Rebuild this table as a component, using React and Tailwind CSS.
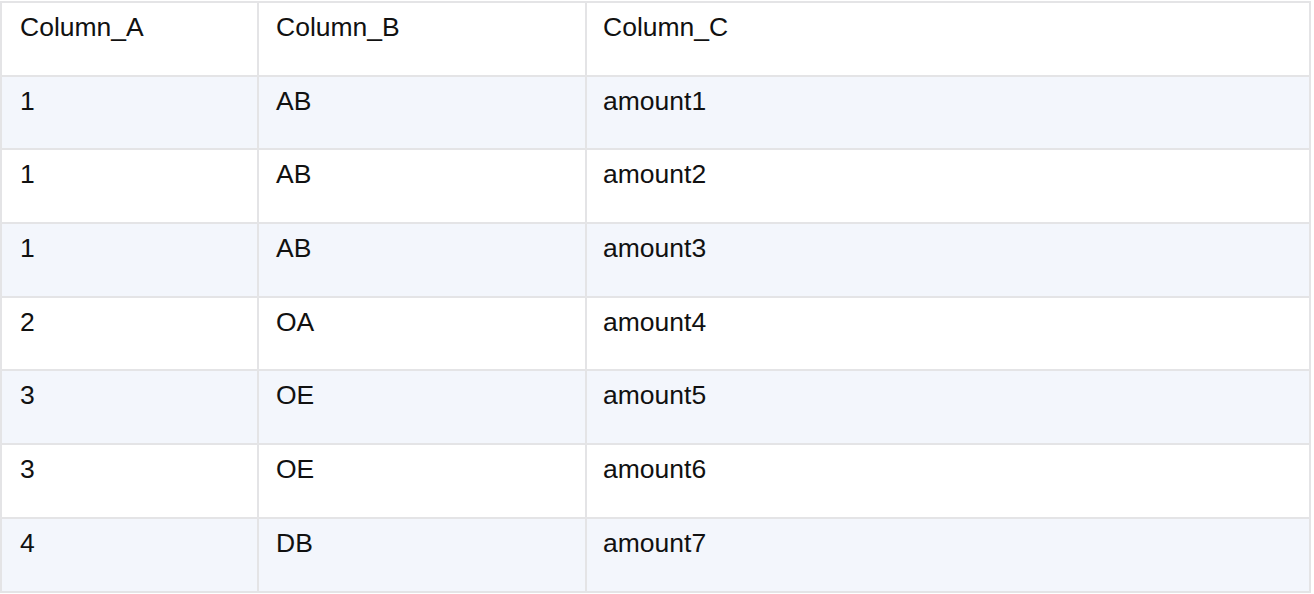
import React from "react";

const rows = [
  ["1", "AB", "amount1"],
  ["1", "AB", "amount2"],
  ["1", "AB", "amount3"],
  ["2", "OA", "amount4"],
  ["3", "OE", "amount5"],
  ["3", "OE", "amount6"],
  ["4", "DB", "amount7"],
];

const pads = ["pl-[18px] border-r-2 border-[#e4e4e6]", "pl-[17px] border-r-2 border-[#e4e4e6]", "pl-[16px]"];

function Row({ cells, bg }) {
  return (
    <div className={`grid grid-cols-[257px_328px_724px] h-[73.7px] border-b-2 border-[#e4e4e6] ${bg}`}>
      {cells.map((c, i) => (
        <div key={i} className={`pt-[9px] text-[26.5px] leading-[30px] text-[#111111] ${pads[i]}`}>
          {c}
        </div>
      ))}
    </div>
  );
}

export default function App() {
  return (
    <div className="w-[1314px] h-[594px] bg-white pt-[1px]" style={{ fontFamily: '"Liberation Sans", Arial, sans-serif' }}>
      <div className="w-[1311px] border-t-2 border-l-2 border-r-2 border-[#e4e4e6]">
        <Row cells={["Column_A", "Column_B", "Column_C"]} bg="bg-white" />
        {rows.map((r, i) => (
          <Row key={i} cells={r} bg={i % 2 === 0 ? "bg-[#f3f6fc]" : "bg-white"} />
        ))}
      </div>
    </div>
  );
}
